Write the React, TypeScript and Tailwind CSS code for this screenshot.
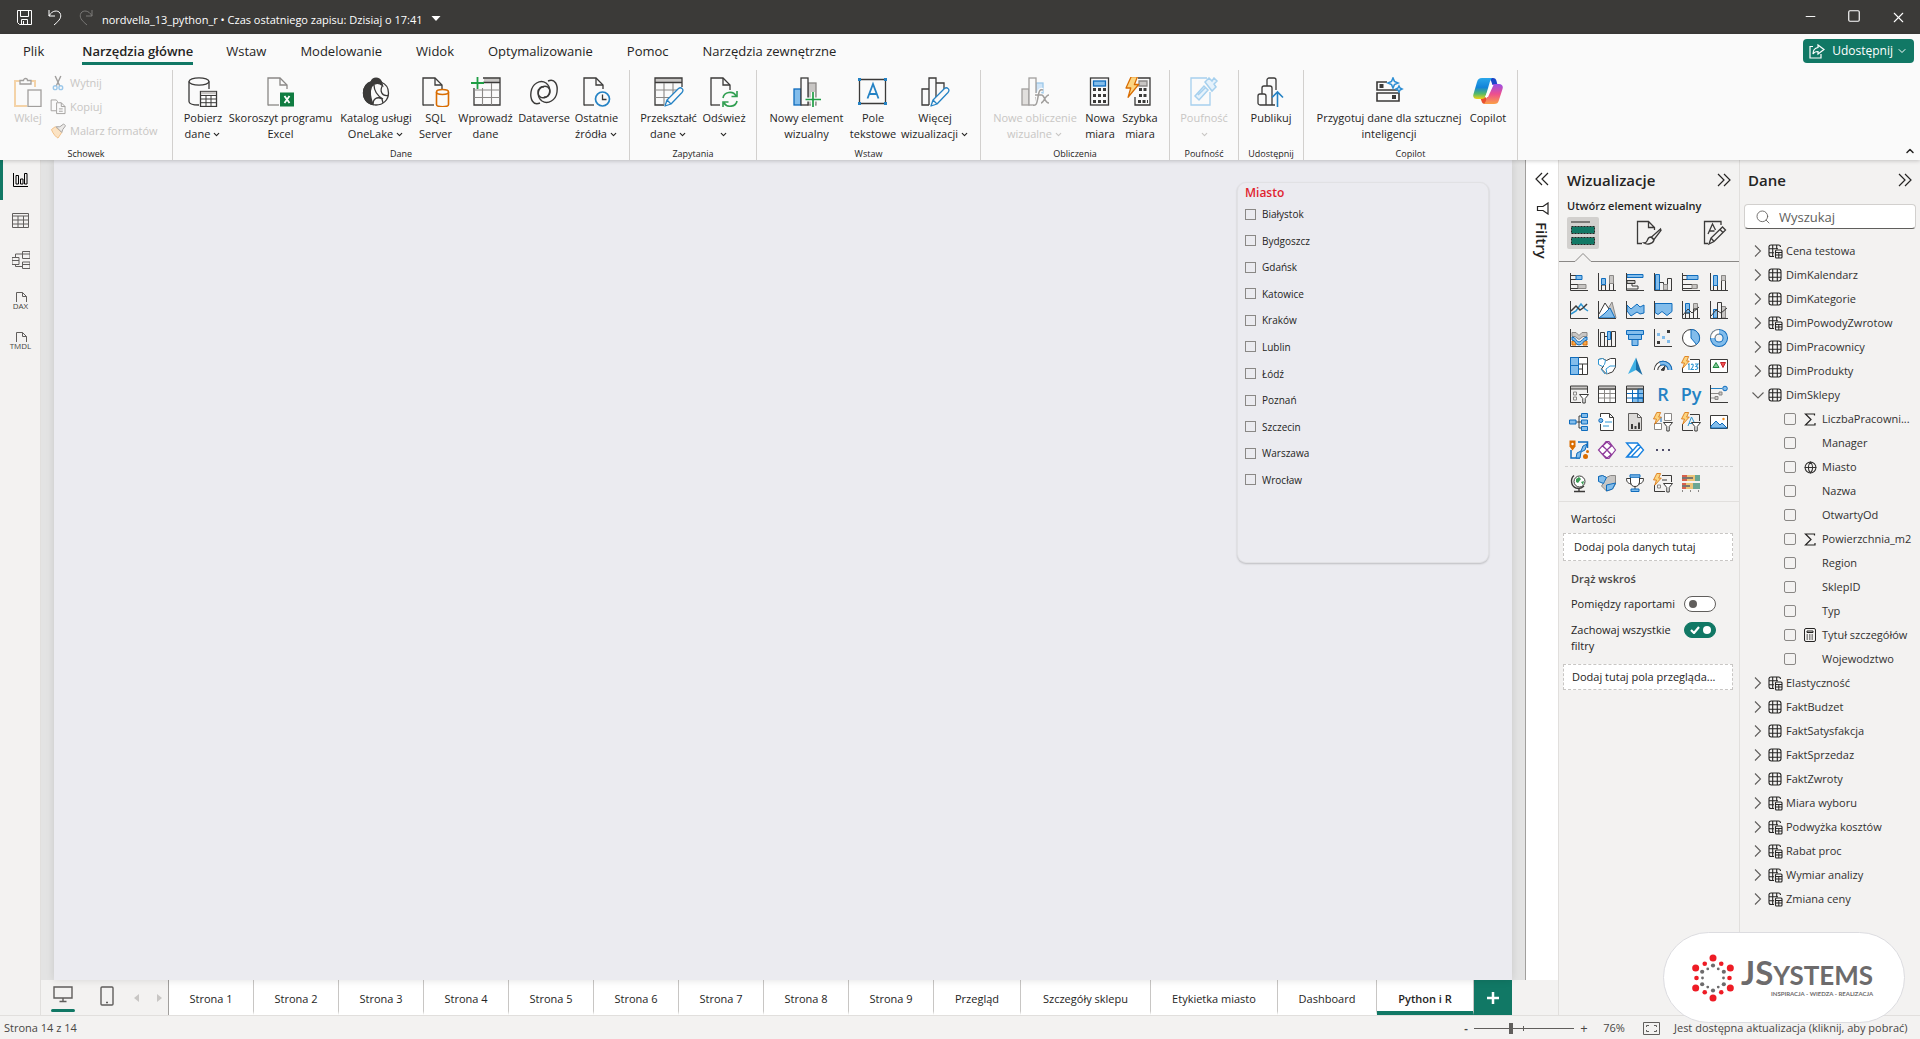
import React, { useState } from 'react';
import { ChevronDown, ChevronUp, Globe, Minus, Search, Square, X } from 'lucide-react';

const DARK = '#3b3a39';
const BLUE = '#0f6cbd';
const SKY = '#83bdeb';
const GRAY = '#c8c6c4';
const MID = '#8a8886';

/* ---------- ribbon icons ---------- */

const RibbonSvg: React.FC<{ children: React.ReactNode }> = ({ children }) => (
  <svg width="30" height="30" viewBox="-1 0 30 30" fill="none" stroke={DARK} strokeWidth="1.3" aria-hidden="true">
    {children}
  </svg>
);

const Page: React.FC<{ cut?: string }> = ({ cut = 'M1 28.5V1h12l7 7v4' }) => (
  <>
    <path d={cut} />
    <path d="M13 1v7h7" />
  </>
);

const BoltShape: React.FC<{ transform?: string }> = ({ transform }) => (
  <path transform={transform} d="M5 0h6L8 7h4L2 18l2.500-8H0z" fill="#fcd581" stroke="#d96c00" strokeWidth="1.2" strokeLinejoin="round" />
);

const PencilShape: React.FC = () => (
  <path d="M10 29l2-6L23.500 11.500c2.500-2 6 1 3.500 4L16 27z M12 23l4 4" fill="#fafafa" stroke="#2482c4" strokeLinejoin="round" />
);

const icons: Record<string, React.ReactNode> = {
  paste: (
    <RibbonSvg>
      <path d="M6 4H1v25h12M17 4h4v6" stroke="#f4d3a8" strokeWidth="2" />
      <path d="M6 7V3.500h3.500a2 2 0 014 0H17V7z" stroke="#a19f9d" />
      <rect x="14" y="13" width="13" height="16.500" stroke="#a19f9d" fill="#fafafa" />
    </RibbonSvg>
  ),
  database: (
    <RibbonSvg>
      <path d="M0 4.500v20c0 2 4 3.500 10 3.500" />
      <path d="M20 4.500V12" />
      <ellipse cx="10" cy="4.500" rx="10" ry="3.700" />
      <rect x="11.500" y="14.500" width="16" height="15" fill="#fff" />
      <path d="M12 16h15" strokeWidth="2.500" stroke={GRAY} />
      <path d="M11.500 18.500h16M11.500 22h16M11.500 25.700h16M17 18v11M22 18v11" strokeWidth="1" />
    </RibbonSvg>
  ),
  excel: (
    <RibbonSvg>
      <g stroke={MID}>
        <Page />
        <path d="M1 28h11" />
      </g>
      <rect x="13" y="15.500" width="14" height="14" fill="#107c41" stroke="none" />
      <path d="M17.500 19l5 7M22.500 19l-5 7" stroke="#fff" strokeWidth="1.800" />
    </RibbonSvg>
  ),
  onelake: (
    <RibbonSvg>
      <path d="M19 5c5 2 7.500 6 7.500 11 0 7-5.500 12-12.500 12S1.500 23 1.500 16C1.500 10 5 6 9 5" />
      <path d="M9 5c2-5 8-5 10.500 0l1 3.500c-4-3-8-2.500-11 1-2 5-1 12 1.500 18C4 26.500 1.500 21 1.500 16 1.500 10 5 6 9 5z" fill={DARK} />
      <path d="M12 8c0 5 3 11 9 14M20.500 8.500c-3 5-1 11 5.500 10M11 27c0-5 4-8 9-5l1 4" />
    </RibbonSvg>
  ),
  sql: (
    <RibbonSvg>
      <Page />
      <path d="M1 28h11" />
      <path d="M14.500 15v12.500c0 3 12 3 12 0V15" fill="#fafafa" stroke="#d96c00" strokeWidth="1.600" />
      <ellipse cx="20.500" cy="15" rx="6" ry="2.500" fill="#fafafa" stroke="#d96c00" strokeWidth="1.600" />
    </RibbonSvg>
  ),
  enter: (
    <RibbonSvg>
      <path d="M12 3.500h16" stroke={GRAY} strokeWidth="4" />
      <path d="M11 1h17v27H2V11M11 5.500h17" />
      <path d="M2 13h26M2 20.500h26M10.500 11v17M19.500 6v22" stroke={MID} strokeWidth="1.100" />
      <path d="M5.500 0v12M-1 6h13" stroke="#1f9e45" strokeWidth="1.800" />
    </RibbonSvg>
  ),
  dataverse: (
    <RibbonSvg>
      <g strokeWidth="1.400">
        <path d="M18 4c7-3 10 4 9 11-1 8-9 13-15 9-5-4-5-11 0-14 4-2 8 0 8 5 0 3-3 6-6 5" />
        <path d="M10 26c-7 3-10-4-9-11C2 7 10 2 16 6c5 4 5 11 0 14-4 2-8 0-8-5 0-3 3-6 6-5" />
      </g>
    </RibbonSvg>
  ),
  recent: (
    <RibbonSvg>
      <Page />
      <path d="M1 28h10" />
      <circle cx="19.500" cy="22" r="7" stroke="#2482c4" strokeWidth="1.700" fill="#fafafa" />
      <path d="M19.500 17.500V22.500h4" stroke={DARK} />
    </RibbonSvg>
  ),
  transform: (
    <RibbonSvg>
      <path d="M0 3h27" stroke={GRAY} strokeWidth="4" />
      <path d="M9 28H0V1h27v9M0 5.500h27" />
      <path d="M0 13h22M0 20.500h14M9 6v22M18 6v11" stroke={MID} strokeWidth="1.100" />
      <PencilShape />
    </RibbonSvg>
  ),
  refresh: (
    <RibbonSvg>
      <Page cut="M1 28.500V1h12l7 7v5" />
      <path d="M1 28h9" />
      <path d="M13 21c1-6 10-8 13-2M27 14v5.500h-5.500M27 24c-1 6-10 7-13 2M13 30v-5h5.500" stroke="#2f9e50" strokeWidth="1.600" />
    </RibbonSvg>
  ),
  visual: (
    <RibbonSvg>
      <rect x="15" y="6" width="8" height="22" fill={GRAY} stroke={MID} />
      <rect x="1" y="12" width="7" height="16" fill={SKY} stroke={BLUE} />
      <rect x="8" y="1" width="7" height="27" fill="#fafafa" />
      <path d="M20 15v15M12.500 22.500H28" stroke="#fafafa" strokeWidth="4" />
      <path d="M20 15v15M12.500 22.500H28" stroke="#1f9e45" strokeWidth="1.700" />
    </RibbonSvg>
  ),
  textbox: (
    <RibbonSvg>
      <path d="M.5 2.500h26v24H.5z" />
      <path d="M8.500 21.500L14 7l5.500 14.500M10.500 17h7" stroke="#2482c4" strokeWidth="1.800" />
      <path d="M-1 1h3v3h-3zM25 1h3v3h-3zM-1 25h3v3h-3zM25 25h3v3h-3z" fill="#2482c4" stroke="none" />
    </RibbonSvg>
  ),
  more: (
    <RibbonSvg>
      <path d="M8 28H1V12h7M8 28V1h7v26M15 6h8v6" />
      <PencilShape />
    </RibbonSvg>
  ),
  fx: (
    <RibbonSvg>
      <rect x="15" y="6" width="7" height="10" fill="#cfe4f7" stroke="#9cc8ea" />
      <rect x="1" y="12" width="7" height="16" fill="#e1dfdd" stroke="#a19f9d" />
      <rect x="8" y="1" width="7" height="27" fill="#fafafa" stroke="#a19f9d" />
      <path d="M22 13c-4-1-4 2-5 7s-1 9-5 8M14 18h6M19 18c4-1 3 8 8 8M27 18c-4 0-5 8-8 8" stroke="#fafafa" strokeWidth="4" />
      <path d="M22 13c-4-1-4 2-5 7s-1 9-5 8M14 18h6M20 18c4-1 3 8 8 8M28 18c-4 0-5 8-8 8" stroke="#a19f9d" strokeWidth="1.500" />
    </RibbonSvg>
  ),
  calc: (
    <RibbonSvg>
      <rect x="4.500" y="1" width="18" height="27" />
      <rect x="7.500" y="4" width="12" height="5" fill={SKY} stroke={BLUE} />
      <path d="M7 12.500h14M7 18.500h14M7 24.500h14" strokeWidth="3" strokeDasharray="3 2" />
    </RibbonSvg>
  ),
  quick: (
    <RibbonSvg>
      <path d="M12 1h12v27H9V20" />
      <path d="M13 4h8v5h-8z" fill={GRAY} stroke={MID} />
      <path d="M13 12.500h9M13 18.500h9M12 24.500h10" strokeWidth="3" strokeDasharray="3 1.500" />
      <BoltShape transform="translate(0 -.5) scale(1.050 1.150)" />
    </RibbonSvg>
  ),
  label: (
    <RibbonSvg>
      <path d="M17 1H1v27h19V15" stroke="#a6d0ee" />
      <path d="M5 19L14 9l4 4-9 10zM8 18l7-7M15 5l4-4 3 3 2-3 3 3-3 3 2 3-4 4z" stroke="#a6d0ee" strokeWidth="1.500" fill="#e6f2fb" />
    </RibbonSvg>
  ),
  publish: (
    <RibbonSvg>
      <path d="M10 9V3c0-1 1-2 2-2h5c1 0 2 1 2 2v10M5 17v-6c0-1 1-2 2-2h6c1 0 2 1 2 2v17M15 28H3c-1 0-2-1-2-2v-7c0-1 1-2 2-2h4c1 0 2 1 2 2v9M15 28h3" />
      <path d="M20.500 30V15M15 20.500l5.500-5.500 5.500 5.500" stroke="#2482c4" strokeWidth="1.600" />
    </RibbonSvg>
  ),
  prepare: (
    <RibbonSvg>
      <path d="M12 5H2v8h22M2 16h22v8H2z" strokeWidth="1.600" />
      <path d="M4.500 7h4v4h-4zM17 18h4v4h-4z" fill={DARK} stroke="none" />
      <path d="M18 1l1.500 3.500L23 6l-3.500 1.500L18 11l-1.500-3.500L13 6l3.500-1.500zM24 9l1 2 2 1-2 1-1 2-1-2-2-1 2-1z" stroke="#2f8fd4" strokeWidth="1.600" fill="#fafafa" />
    </RibbonSvg>
  ),
  copilot: (
    <RibbonSvg>
      <defs>
        <linearGradient id="cpLeft" x1="0" y1="0" x2="0" y2="1">
          <stop offset="0" stopColor="#2aa7ea" />
          <stop offset=".45" stopColor="#1283d9" />
          <stop offset=".75" stopColor="#55b96a" />
          <stop offset="1" stopColor="#f3d313" />
        </linearGradient>
        <linearGradient id="cpRight" x1="0" y1="0" x2="0" y2="1">
          <stop offset="0" stopColor="#9a4fe6" />
          <stop offset=".5" stopColor="#ee4f8e" />
          <stop offset="1" stopColor="#fba045" />
        </linearGradient>
      </defs>
      <g stroke="none">
        <path d="M16 1h3c2 0 3 1 3.500 3l1 4h-5z" fill="#1b46c8" />
        <path d="M6 20h4c2 0 3 1 3 3l1 4h-3c-2 0-3-1-3.500-3z" fill="#e8502e" />
        <path d="M8 1h10c-1 1-2 3-2.500 5L12 18c-1 3-2 4-5 4H3c-3 0-4.500-2-3.500-5L3 5c1-3 2-4 5-4z" fill="url(#cpLeft)" />
        <path d="M20 27H10c1-1 2-3 2.500-5L16 11c1-3 2-4 5-4h4c3 0 4.500 2 3.500 5L25 23c-1 3-2 4-5 4z" fill="url(#cpRight)" />
        <path d="M16.500 8h3L14 20h-3z" fill="#fff" />
      </g>
    </RibbonSvg>
  ),
};

/* ---------- visual gallery icons ---------- */

const Axis = () => <path d="M.5 0v17.500H18" />;

const galleryIcons: { name: string; art?: React.ReactNode; text?: string }[] = [
  {
    name: 'Skumulowany wykres słupkowy poziomy',
    art: (
      <>
        <path d="M1 2.500h6v4H1M1 11.500h7v4H1" />
        <path d="M6 2.500h6v4H6z" fill={SKY} stroke={BLUE} />
        <path d="M8 11.500h8v4H8z" fill={GRAY} stroke={MID} />
        <Axis />
      </>
    ),
  },
  {
    name: 'Skumulowany wykres kolumnowy',
    art: (
      <>
        <path d="M3.500 17v-5h4v5M11.500 17V10h4v7" />
        <path d="M3.500 5.500h4v6h-4z" fill={SKY} stroke={BLUE} />
        <path d="M11.500 2.500h4v8h-4z" fill={GRAY} stroke={MID} />
        <Axis />
      </>
    ),
  },
  {
    name: 'Grupowany wykres słupkowy poziomy',
    art: (
      <>
        <path d="M1 1.500h16v3H1z" fill={SKY} stroke={BLUE} />
        <path d="M1 7.500h8v3H1z" fill={GRAY} />
        <path d="M1 10.500h5v2.500h6v3H1" />
        <Axis />
      </>
    ),
  },
  {
    name: 'Grupowany wykres kolumnowy',
    art: (
      <>
        <path d="M1.500 1.500h4V17h-4z" fill={SKY} stroke={BLUE} />
        <path d="M5.500 9.500h4V17M13.500 17V5.500h4V17" />
        <path d="M9.500 11.500h4V17h-4z" fill={GRAY} stroke={MID} />
        <Axis />
      </>
    ),
  },
  {
    name: 'Wykres 100% słupkowy',
    art: (
      <>
        <path d="M1 6.500h14M1 2.500h4M1 11.500h14v4H1" />
        <path d="M5 2.500h11v4H5z" fill={SKY} stroke={BLUE} />
        <path d="M10 11.500h5v4h-5z" fill={GRAY} stroke={MID} />
        <Axis />
      </>
    ),
  },
  {
    name: 'Wykres 100% kolumnowy',
    art: (
      <>
        <path d="M3.500 17V3M7.500 3v14M11.500 17V3h4v14" />
        <path d="M3.500 2.500h4v10h-4z" fill={SKY} stroke={BLUE} />
        <path d="M11.500 2.500h4v5h-4z" fill={GRAY} stroke={MID} />
        <Axis />
      </>
    ),
  },
  {
    name: 'Wykres liniowy',
    art: (
      <>
        <path d="M1 13l5-3 5-7 4 5 3 2" stroke="#2e96d2" strokeWidth="1.500" />
        <path d="M1 10l5-5 4 4 3-2 4-4" strokeWidth="1.500" />
        <Axis />
      </>
    ),
  },
  {
    name: 'Wykres warstwowy',
    art: (
      <>
        <path d="M8 11l6-10 4 16" fill={GRAY} stroke={MID} />
        <path d="M1 13L7 2l6 9" fill="#fff" />
        <path d="M1 17l5-4 6-6 5 10z" fill={SKY} stroke={BLUE} />
        <Axis />
      </>
    ),
  },
  {
    name: 'Skumulowany wykres warstwowy',
    art: (
      <>
        <path d="M1 4l4 4 6-5 3 3 4-2v8l-4 1-3-2-6 4-4-5z" fill={SKY} stroke={BLUE} />
        <Axis />
      </>
    ),
  },
  {
    name: 'Wykres warstwowy 100%',
    art: (
      <>
        <path d="M1 2.500h17v8l-5 4-5-4-4 3-3-2z" fill={SKY} stroke={BLUE} />
        <Axis />
      </>
    ),
  },
  {
    name: 'Wykres liniowy i skumulowany kolumnowy',
    art: (
      <>
        <path d="M3.500 2.500h4V12h-4z" fill={SKY} stroke={BLUE} />
        <path d="M11.500 2.500h4V8h-4z" fill={GRAY} stroke={MID} />
        <path d="M3.500 17v-5h4v5M11.500 17V8h4v9M1 14l5-6 4 4 7-6" />
        <Axis />
      </>
    ),
  },
  {
    name: 'Wykres liniowy i grupowany kolumnowy',
    art: (
      <>
        <path d="M3.500 8.500h4V17h-4z" fill={SKY} stroke={BLUE} />
        <path d="M11.500 5.500h4V17h-4z" fill={GRAY} stroke={MID} />
        <path d="M7.500 17V1.500h4V17M1 15l5-6 5 3 6-5" />
        <Axis />
      </>
    ),
  },
  {
    name: 'Wykres wstążkowy',
    art: (
      <>
        <path d="M2 3.500h4l3 3 3-3h5v4h-4l-4 3-4-3H2z" fill={GRAY} stroke={MID} />
        <path d="M2 12h4v4H2zM13 12h4v4h-4z" fill="#f7a64a" stroke="#d96c00" />
        <path d="M2 8c4 0 4 5 7 5s4-5 8-5v3c-4 0-4 5-8 5s-3-5-7-5z" fill={SKY} stroke={BLUE} />
        <Axis />
      </>
    ),
  },
  {
    name: 'Wykres kaskadowy',
    art: (
      <>
        <path d="M2.500 17V3.500h4V17M6.500 7.500h3V17M13.500 17V2.500h4V17" />
        <path d="M9.500 2.500h3v8h-3z" fill={SKY} stroke={BLUE} />
        <Axis />
      </>
    ),
  },
  {
    name: 'Lejek',
    art: <path d="M.5 1.500h17v4H.5zM2.500 5.500h13v5h-13zM6 10.500h6v6H6z" fill={SKY} stroke={BLUE} />,
  },
  {
    name: 'Wykres punktowy',
    art: (
      <>
        <path d="M13 1h3v3h-3zM3 12h3v3H3z" fill={DARK} stroke="none" />
        <path d="M3 4h3v3H3zM8 7h3v3H8zM13 11h3v3h-3z" fill={SKY} stroke="none" />
        <Axis />
      </>
    ),
  },
  {
    name: 'Wykres kołowy',
    art: (
      <>
        <circle cx="9" cy="9" r="8.500" fill="#fff" />
        <path d="M9 .5V9l5.500 6.500A8.500 8.500 0 009 .5z" fill={SKY} stroke={BLUE} />
      </>
    ),
  },
  {
    name: 'Wykres pierścieniowy',
    art: (
      <>
        <circle cx="9" cy="9" r="6.300" stroke={BLUE} strokeWidth="5.500" />
        <circle cx="9" cy="9" r="6.300" stroke={SKY} strokeWidth="3.500" />
        <path d="M2.700 9A6.300 6.300 0 019 2.700" stroke={MID} strokeWidth="5.500" />
        <path d="M2.700 9A6.300 6.300 0 019 2.700" stroke="#fff" strokeWidth="3.500" />
      </>
    ),
  },
  {
    name: 'Mapa drzewa',
    art: (
      <>
        <path d="M.5.500h17v17H.5zM8.500 7h9M8.500 12h4M12.500 7v10" fill="#fff" />
        <path d="M.5.500h8v8h-8zM.5 8.500h8v9h-8z" fill={SKY} stroke={BLUE} />
      </>
    ),
  },
  {
    name: 'Mapa',
    art: (
      <>
        <path d="M.5 2.500l4-1 4 2 4-2h5V10l-3 5-6 2-5-5 2-3-4-2z" fill="#fff" />
        <path d="M.5 2.500l4-1 3 2-1 4-2 2-4-2zM9 17l-1-5 4-3h5.500M3 12l4 5" stroke="#2e96d2" fill="#fff" />
      </>
    ),
  },
  {
    name: 'Azure Map',
    art: (
      <>
        <path d="M10 .500L2 17l8-4z" fill="#3fb0e4" stroke="none" />
        <path d="M10 .500L16.500 18 10 13z" fill="#1b6ea6" stroke="none" />
      </>
    ),
  },
  {
    name: 'Miernik',
    art: (
      <>
        <path d="M2 13a7 7 0 0114 0" stroke={DARK} strokeWidth="4.500" />
        <path d="M2 13a7 7 0 0114 0" stroke="#fff" strokeWidth="2.500" />
        <path d="M6 6.700A7 7 0 0116 13" stroke={BLUE} strokeWidth="4.500" />
        <path d="M6 6.700A7 7 0 0116 13" stroke={SKY} strokeWidth="2.500" />
        <path d="M7 13l4-4-1 4.500z" fill={DARK} />
      </>
    ),
  },
  {
    name: 'Karta',
    art: (
      <>
        <path d="M8 2.500h9.500v13H.5v-5" fill="#fff" />
        <path d="M6 7.500l1-.500v6M9 7.500c3-1.500 3 1.500 0 5h3M13 7h3l-2 2.500c3 0 2 3.500-1 3" stroke="#2e96d2" strokeWidth="1.100" />
        <BoltShape transform="translate(-.5 -.5) scale(.65)" />
      </>
    ),
  },
  {
    name: 'KPI',
    art: (
      <>
        <path d="M.5 2.500h17v13H.5z" fill="#fff" />
        <path d="M3 10.500l3-5 3 5z" fill="#7fc796" stroke="#1f8a3f" />
        <path d="M10.500 5.500h5l-2.500 5z" fill="#f05050" stroke="#c4262e" />
      </>
    ),
  },
  {
    name: 'Fragmentator',
    art: (
      <>
        <path d="M.5 1h17v3H.5z" fill={GRAY} />
        <path d="M17.500 4v4M.5 4v13.500H11" />
        <path d="M3.500 7h3v3h-3zM3.500 12h3v3h-3z" stroke={MID} />
        <path d="M9.500 9.500h9l-3.300 4V18h-2.400v-4.500z" fill="#fff" />
      </>
    ),
  },
  {
    name: 'Tabela',
    art: (
      <>
        <path d="M.5 4h17v13.500H.5z" fill="#fff" />
        <path d="M6.500 5v12M12 5v12M1 8.500h16M1 13h16" stroke={MID} />
        <path d="M1 2.300h16" stroke={GRAY} strokeWidth="2" />
        <path d="M.5 1h17v16.500H.5zM.5 4h17" />
      </>
    ),
  },
  {
    name: 'Macierz',
    art: (
      <>
        <path d="M.5 4h17v13.500H.5z" fill="#fff" />
        <path d="M12 4h5.500v9H12zM6.500 13H17v4.500H6.500z" fill={SKY} stroke={BLUE} />
        <path d="M6.500 5v12M12 5v12M1 8.500h16M1 13h16" stroke={BLUE} />
        <path d="M1 2.300h16" stroke={GRAY} strokeWidth="2" />
        <path d="M.5 1h17v16.500H.5zM.5 4h17" />
      </>
    ),
  },
  { name: 'Wizualizacja skryptu języka R', text: 'R' },
  { name: 'Wizualizacja w języku Python', text: 'Py' },
  {
    name: 'Kluczowe elementy wpływające',
    art: (
      <>
        <path d="M1 8.500h8M1 13h4" stroke={MID} />
        <path d="M1 3.500h11" stroke="#2482c4" />
        <circle cx="15" cy="3.500" r="2.300" fill={SKY} stroke={BLUE} />
        <path d="M9 7h3v3H9zM5 11.500h3v3H5z" fill={GRAY} stroke={MID} />
        <Axis />
      </>
    ),
  },
  {
    name: 'Drzewo dekompozycji',
    art: (
      <>
        <path d="M6 9h6M12 3H9v12h3" />
        <path d="M-.5 7h6.500v4H-.5zM11.500.500h6v4h-6zM11.500 7h6v4h-6zM11.500 13.500h6v4h-6z" fill={SKY} stroke={BLUE} />
      </>
    ),
  },
  {
    name: 'Pytania i odpowiedzi',
    art: (
      <>
        <path d="M2.500 4V.500h9l4 4v13h-13V11M11.500.500v4h4" fill="#fff" />
        <path d="M7 9h7M5 13h6" stroke="#2e96d2" />
        <circle cx="2.800" cy="7.500" r="2" fill={SKY} stroke={BLUE} />
      </>
    ),
  },
  {
    name: 'Raport podzielony na strony',
    art: (
      <>
        <path d="M2.500.500h9l4 4v13h-13zM11.500.500v4h4" fill="#dddbd9" stroke="#605e5c" />
        <path d="M5 11h2v5H5zM8.500 13h2v3h-2zM12 9.500h2V16h-2z" fill={DARK} stroke="none" />
      </>
    ),
  },
  {
    name: 'Narracja inteligentna',
    art: (
      <>
        <path d="M10.500.500h7v7h-7zM.5 10.500h7v6h-7z" fill="#fff" stroke={MID} />
        <path d="M7 4v5" stroke={BLUE} />
        <path d="M9.500 9.500h9l-3.300 4V18h-2.400v-4.500z" fill="#fff" />
        <BoltShape transform="translate(-.5 -.5) scale(.65)" />
      </>
    ),
  },
  {
    name: 'Fragmentator tekstu',
    art: (
      <>
        <path d="M8 1.500h9.500V8M.5 11v6.500H11" />
        <path d="M6 13l3.500-9 3 6M7 10.500h3" stroke="#2e96d2" />
        <path d="M9.500 9.500h9l-3.300 4V18h-2.400v-4.500z" fill="#fff" />
        <BoltShape transform="translate(-.5 -.5) scale(.65)" />
      </>
    ),
  },
  {
    name: 'Obraz',
    art: (
      <>
        <path d="M.5 2.500h17v13H.5z" fill="#fff" />
        <path d="M1 13l5-5 4 4 2-2 5 5H1z" fill={SKY} stroke={BLUE} />
        <circle cx="13.500" cy="6" r="1.200" fill="#f28a1a" stroke="none" />
      </>
    ),
  },
  {
    name: 'Mapy ArcGIS',
    art: (
      <>
        <path d="M8 1h9.500v6M1 9v8h9" stroke={BLUE} strokeWidth="1.500" />
        <path d="M6 17l1-5 4-2 2-5 4-2-2 6-4 2-1 6z" fill={SKY} stroke={BLUE} />
        <path d="M-.5-.500h6v6L2.500 9.500-.5 5.500z" fill="#d96c00" stroke="none" />
        <circle cx="2.500" cy="3" r="1.200" fill="#fff" stroke="none" />
        <circle cx="15.500" cy="15.500" r="2.500" fill="#d96c00" stroke="none" />
        <circle cx="17.500" cy="10.500" r="1.500" fill="#d96c00" stroke="none" />
      </>
    ),
  },
  {
    name: 'Power Apps',
    art: (
      <path
        d="M4.500 5L8 .500h3L17.500 9 11 17.500H8L.5 9l4-4.500L9 9l4.500 5M13.500 4.500L9 9l-4.500 5M9 1l4.500 4L9 9 4.500 5zM9 9l4.500 4.500L9 17l-4.500-3.500z"
        stroke="#8f3a9b"
        fill="#fff"
        strokeWidth="1.200"
      />
    ),
  },
  {
    name: 'Power Automate',
    art: (
      <path d="M.5 2h11L17.500 9l-6 7H.5l6-7zM2 15L12.500 3M5 16L15 5.500" stroke="#1680e0" strokeWidth="1.300" fill="#fff" />
    ),
  },
  {
    name: 'Więcej opcji',
    art: <path d="M2 8h2v2H2zM8 8h2v2H8zM14 8h2v2h-2z" fill="#4f4d6a" stroke="none" />,
  },
];

const customIcons: { name: string; art: React.ReactNode }[] = [
  {
    name: 'Globus',
    art: (
      <>
        <circle cx="9.500" cy="7.500" r="5.500" fill="#fff" />
        <path d="M6 5l3-2 2 2-3 4-2-1zM11 8l3-1-1 4z" fill="#3a9b54" stroke="none" />
        <path d="M4 1.500C0 5 1 12 6 14c3 1 6 0 8-2M9 14v3.500M4 17.500h11" strokeWidth="1.400" />
      </>
    ),
  },
  {
    name: 'Kartogram',
    art: (
      <>
        <path d="M.5 2.500l4-1 4 2 4-2h5V10l-3 5-6 2-5-5 2-3-4-2z" fill={GRAY} stroke={MID} />
        <path d="M.5 2.500l4-1 4 2-2 4-1 2-5-2zM8.500 11l9-2-3 6-6 2z" fill={SKY} stroke={BLUE} />
      </>
    ),
  },
  {
    name: 'Cele',
    art: (
      <>
        <path d="M4.500 4.500h-4c0 4 2 5 5 5.500M13.500 4.500h4c0 4-2 5-5 5.500M4.500 3v5c0 3 2 4.500 4.500 4.500s4.500-1.500 4.500-4.500V3M9 12.500V15" fill="#fff" />
        <path d="M4 .800h10v2.500H4zM5 15h8v2.500H5z" fill={SKY} stroke={BLUE} />
      </>
    ),
  },
  {
    name: 'Fragmentator listy',
    art: (
      <>
        <path d="M8 1.500h9.500V8M.5 11v6.500H11M8 6h5" />
        <path d="M3.500 11h3v3h-3z" stroke={MID} />
        <path d="M9.500 9.500h9l-3.300 4V18h-2.400v-4.500z" fill="#fff" />
        <BoltShape transform="translate(-.5 -.5) scale(.65)" />
      </>
    ),
  },
  {
    name: 'Wykres punktorowy',
    art: (
      <g stroke="none">
        <path d="M0 1h5v6H0zM0 9h4v6H0z" fill="#d9604c" />
        <path d="M5 1h8v6H5zM4 9h7v6H4z" fill="#ecc578" />
        <path d="M13 1h5v6h-5zM11 9h7v6h-7z" fill="#6aa793" />
        <path d="M0 3h11v2H0zM0 11h8v2H0z" fill="#7a7570" />
        <path d="M0 16h1v2H0zM8 16h1v2H8zM16 16h1v2h-1z" fill={MID} />
      </g>
    ),
  },
];

const GalleryButton: React.FC<{ name: string; art?: React.ReactNode; text?: string }> = ({ name, art, text }) => (
  <button type="button" aria-label={name} title={name} className="flex h-7 w-7 items-center justify-center">
    {text ? (
      <span className="text-[18px] leading-5 font-semibold text-[#2482c4]">{text}</span>
    ) : (
      <svg width="20" height="20" viewBox="-1 -1 20 20" fill="none" stroke={DARK}>
        {art}
      </svg>
    )}
  </button>
);

/* ---------- ribbon ---------- */

interface RibbonItem {
  icon: string;
  lines: string[];
  width: string;
  menu?: boolean;
  disabled?: boolean;
}

interface RibbonGroup {
  label: string;
  width: string;
  items: RibbonItem[];
}

const ribbonGroups: RibbonGroup[] = [
  {
    label: 'Dane',
    width: 'w-[457px]',
    items: [
      { icon: 'database', lines: ['Pobierz', 'dane'], width: 'w-[44px]', menu: true },
      { icon: 'excel', lines: ['Skoroszyt programu', 'Excel'], width: 'w-[111px]' },
      { icon: 'onelake', lines: ['Katalog usługi', 'OneLake'], width: 'w-[80px]', menu: true },
      { icon: 'sql', lines: ['SQL', 'Server'], width: 'w-[39px]' },
      { icon: 'enter', lines: ['Wprowadź', 'dane'], width: 'w-[61px]' },
      { icon: 'dataverse', lines: ['Dataverse'], width: 'w-[56px]' },
      { icon: 'recent', lines: ['Ostatnie', 'źródła'], width: 'w-[49px]', menu: true },
    ],
  },
  {
    label: 'Zapytania',
    width: 'w-[127px]',
    items: [
      { icon: 'transform', lines: ['Przekształć', 'dane'], width: 'w-[62px]', menu: true },
      { icon: 'refresh', lines: ['Odśwież', ''], width: 'w-[49px]', menu: true },
    ],
  },
  {
    label: 'Wstaw',
    width: 'w-[224px]',
    items: [
      { icon: 'visual', lines: ['Nowy element', 'wizualny'], width: 'w-[82px]' },
      { icon: 'textbox', lines: ['Pole', 'tekstowe'], width: 'w-[51px]' },
      { icon: 'more', lines: ['Więcej', 'wizualizacji'], width: 'w-[73px]', menu: true },
    ],
  },
  {
    label: 'Obliczenia',
    width: 'w-[189px]',
    items: [
      { icon: 'fx', lines: ['Nowe obliczenie', 'wizualne'], width: 'w-[92px]', menu: true, disabled: true },
      { icon: 'calc', lines: ['Nowa', 'miara'], width: 'w-[38px]' },
      { icon: 'quick', lines: ['Szybka', 'miara'], width: 'w-[42px]' },
    ],
  },
  {
    label: 'Poufność',
    width: 'w-[69px]',
    items: [{ icon: 'label', lines: ['Poufność', ''], width: 'w-[52px]', menu: true, disabled: true }],
  },
  {
    label: 'Udostępnij',
    width: 'w-[65px]',
    items: [{ icon: 'publish', lines: ['Publikuj'], width: 'w-[46px]' }],
  },
  {
    label: 'Copilot',
    width: 'w-[214px]',
    items: [
      { icon: 'prepare', lines: ['Przygotuj dane dla sztucznej', 'inteligencji'], width: 'w-[155px]' },
      { icon: 'copilot', lines: ['Copilot'], width: 'w-[43px]' },
    ],
  },
];

const RibbonButton: React.FC<{ item: RibbonItem }> = ({ item }) => (
  <button
    type="button"
    disabled={item.disabled}
    className={`flex shrink-0 flex-col items-center text-[11px] leading-4 whitespace-nowrap disabled:text-[#c8c6c4] ${item.width}`}
  >
    {icons[item.icon]}
    <span className="mt-[3px] flex flex-col items-center">
      {item.lines.map((line, i) => (
        <span key={i} className="flex h-4 items-center gap-[2px]">
          {line}
          {item.menu && i === item.lines.length - 1 && <ChevronDown size={9} strokeWidth={3} />}
        </span>
      ))}
    </span>
  </button>
);

const clipboardItems = [
  {
    label: 'Wytnij',
    art: (
      <>
        <path d="M5 1l5 11M11 1L6 12" stroke="#a19f9d" strokeWidth="1.500" />
        <circle cx="5" cy="13.500" r="2" stroke="#9cc8ea" strokeWidth="1.500" />
        <circle cx="11" cy="13.500" r="2" stroke="#9cc8ea" strokeWidth="1.500" />
      </>
    ),
  },
  {
    label: 'Kopiuj',
    art: <path d="M6 12.500H.7V1H6l2 2M6.500 4h5l4 4v7.500h-9zM11.500 4v4h4M9 10.500h4M9 13h4" stroke="#a19f9d" />,
  },
  {
    label: 'Malarz formatów',
    art: (
      <>
        <path d="M1 7l4-3 7 6-4 6c-2-1-5-4-7-9z" fill="#fbe3c4" stroke="#f0be84" />
        <path d="M6 4l6 6 1-3 3-4-2-2-4 3z" fill="#eceae8" stroke="#a19f9d" />
      </>
    ),
  },
];

const TitleBar: React.FC = () => (
  <header className="flex h-[34px] shrink-0 items-center bg-[#3b3a38] text-white">
    <div className="flex items-center gap-[14px] pl-4">
      <button type="button" aria-label="Zapisz">
        <svg width="17" height="17" viewBox="0 0 17 17" fill="none" stroke="#fff">
          <path d="M1.500 1.500h14v14h-12l-2-2zM4.500 1.500v6h8v-6M5.500 15.500v-5h6v5M7.500 15v-3" />
        </svg>
      </button>
      <button type="button" aria-label="Cofnij">
        <svg width="17" height="17" viewBox="0 0 17 17" fill="none" stroke="#fff">
          <path d="M2 1v6h6M2 7c3-6 9-6 11-3 2 4 0 7-6 12" />
        </svg>
      </button>
      <button type="button" aria-label="Ponów" disabled>
        <svg width="17" height="17" viewBox="0 0 17 17" fill="none" stroke="#7a7977">
          <path d="M14 1v6H8M14 7C11 1 5 1 3 4c-2 4 0 7 6 12" />
        </svg>
      </button>
    </div>
    <button type="button" className="ml-[7px] flex items-center gap-2 pt-[6px] text-[11px] leading-4">
      <span>nordvella_13_python_r • Czas ostatniego zapisu: Dzisiaj o 17:41</span>
      <svg width="10" height="10" viewBox="0 0 10 10" fill="#fff">
        <path d="M.5 1h9L5 6z" />
      </svg>
    </button>
    <div className="ml-auto flex">
      <button type="button" aria-label="Minimalizuj" className="flex w-11 justify-center">
        <Minus size={15} strokeWidth={1.500} />
      </button>
      <button type="button" aria-label="Maksymalizuj" className="flex w-11 justify-center">
        <Square size={14} strokeWidth={2} />
      </button>
      <button type="button" aria-label="Zamknij" className="flex w-11 justify-center">
        <X size={17} strokeWidth={1.500} />
      </button>
    </div>
  </header>
);

const menu = ['Wstaw', 'Modelowanie', 'Widok', 'Optymalizowanie', 'Pomoc', 'Narzędzia zewnętrzne'];

const Ribbon: React.FC = () => (
  <div className="relative z-10 shrink-0 bg-[#fafafa] shadow-[0_1px_4px_rgba(0,0,0,0.2)]">
    <nav className="flex h-9 items-center pr-[6px] pb-[2px] pl-[23px] text-[13px] leading-4">
      <button type="button" className="mr-[38px]">Plik</button>
      <button type="button" className="mr-[33px] flex h-full flex-col justify-between pt-[9px] pb-[3px] font-semibold">
        Narzędzia główne
        <span className="h-[3px] w-full bg-[#117865]" />
      </button>
      <div className="flex gap-[34px]">
        {menu.map((m) => (
          <button key={m} type="button">{m}</button>
        ))}
      </div>
      <button type="button" className="ml-auto flex h-6 items-center gap-[7px] rounded bg-[#117865] px-[6px] text-[12px] text-white">
        <svg width="16" height="15" viewBox="0 0 16 15" fill="none" stroke="#fff" strokeWidth="1.200">
          <path d="M4 2.500H1v11.500h11V10M9 1l6 4.500L9 10V7.500C7 7.500 5 8 4 10c0-4 2-6 5-6.500z" />
        </svg>
        <span className="flex items-center gap-[3px]">
          Udostępnij
          <ChevronDown size={12} strokeWidth={2} />
        </span>
      </button>
    </nav>
    <div className="flex h-[90px]">
      <section className="flex w-[173px] shrink-0 flex-col border-r border-[#d2d0ce] pt-[7px]">
        <div className="flex flex-1 gap-[6px] pl-3 text-[11px] leading-4 text-[#c8c6c4]">
          <button type="button" disabled className="flex w-[32px] flex-col items-center gap-[3px]">
            {icons.paste}
            Wklej
          </button>
          <div className="-mt-[2px] flex flex-col gap-2">
            {clipboardItems.map((c) => (
              <button key={c.label} type="button" disabled className="flex items-center gap-1 whitespace-nowrap">
                <svg width="16" height="16" viewBox="0 0 16 17" fill="none">{c.art}</svg>
                {c.label}
              </button>
            ))}
          </div>
        </div>
        <h3 className="h-3 text-center text-[9px] leading-3">Schowek</h3>
      </section>
      {ribbonGroups.map((g) => (
        <section key={g.label} className={`flex shrink-0 flex-col border-r border-[#d2d0ce] pt-[7px] ${g.width}`}>
          <div className="flex flex-1 justify-center">
            {g.items.map((item) => (
              <RibbonButton key={item.icon} item={item} />
            ))}
          </div>
          <h3 className="h-3 text-center text-[9px] leading-3">{g.label}</h3>
        </section>
      ))}
      <button type="button" aria-label="Zwiń wstążkę" className="mr-1 mb-[3px] ml-auto self-end">
        <ChevronUp size={12} strokeWidth={3} />
      </button>
    </div>
  </div>
);

/* ---------- left rail ---------- */

const railIcons = [
  { name: 'Widok raportu', art: <path d="M1.500 2v13.500H16M4 4.500h2.500V13H4zM8.500 8H11v5H8.500zM12.500 2.500H15V13h-2.500z" stroke="#000" /> },
  { name: 'Widok tabeli', art: <path d="M.5 2.500h16v14H.5zM.5 5h16M.5 9h16M.5 13h16M6 5v11M11.500 5v11" /> },
  { name: 'Widok modelu', art: <path d="M0 6.500h7v7H0zM0 9.500h7M10.500.500H18v7h-7.500zM10.500 3H18M10.500 11H18v6.500h-7.500zM10.500 13.500H18M3.500 6V3h7M3.500 14v1.500h7" /> },
  { name: 'Widok zapytania DAX', label: 'DAX' },
  { name: 'Widok TMDL', label: 'TMDL' },
];

const Rail: React.FC = () => (
  <nav className="flex w-[41px] shrink-0 flex-col border-r border-[#e1dfdd] bg-[#f3f2f1]">
    {railIcons.map((r, i) => (
      <button
        key={r.name}
        type="button"
        aria-label={r.name}
        className={`flex h-10 w-full flex-col items-center justify-center border-l-[3px] pr-[2px] ${i === 0 ? 'border-[#117865]' : 'border-transparent'}`}
      >
        {r.art ? (
          <svg width="18" height="18" viewBox="0 0 18 18" fill="none" stroke="#605e5c">{r.art}</svg>
        ) : (
          <>
            <svg width="14" height="10" viewBox="0 0 14 10" fill="none" stroke="#605e5c">
              <path d="M2.500 10V.500h6l4 4V10M8.500.500v4h4" />
            </svg>
            <span className="text-[8px] leading-[7px] text-[#484644]">{r.label}</span>
          </>
        )}
      </button>
    ))}
  </nav>
);

/* ---------- report page ---------- */

const cities = ['Białystok', 'Bydgoszcz', 'Gdańsk', 'Katowice', 'Kraków', 'Lublin', 'Łódź', 'Poznań', 'Szczecin', 'Warszawa', 'Wrocław'];

const Slicer: React.FC = () => (
  <section className="absolute top-[22px] right-[23px] h-[381px] w-[252px] rounded-[9px] border border-[#e1e1e4] bg-[#ebebf0] px-[7px] pt-[2px] shadow-[0_1px_2px_rgba(0,0,0,0.2)]">
    <h2 className="text-[12px] leading-4 font-semibold text-[#e0242f]">Miasto</h2>
    <ul className="mt-[5px] flex h-[282px] flex-col justify-between">
      {cities.map((c) => (
        <li key={c}>
          <label className="flex h-4 items-center gap-[6px] text-[10px] leading-4">
            <input type="checkbox" className="h-[11px] w-[11px] appearance-none border border-[#8a8886] checked:bg-[#605e5c]" />
            {c}
          </label>
        </li>
      ))}
    </ul>
  </section>
);

const tabs = [
  ...Array.from({ length: 9 }, (_, i) => ({ name: `Strona ${i + 1}`, width: 'w-[85px]' })),
  { name: 'Przegląd', width: 'w-[87px]' },
  { name: 'Szczegóły sklepu', width: 'w-[130px]' },
  { name: 'Etykietka miasto', width: 'w-[127px]' },
  { name: 'Dashboard', width: 'w-[99px]' },
  { name: 'Python i R', width: 'w-[97px]' },
];

const PageTabs: React.FC = () => {
  const [active, setActive] = useState('Python i R');
  return (
    <div className="flex h-[35px] shrink-0 bg-[#f3f2f1] text-[11px] leading-4">
      <div className="flex w-[128px] shrink-0 items-center border-r border-[#a19f9d] pl-[10px]">
        <button type="button" aria-label="Układ pulpitu" className="flex w-6 flex-col items-center gap-[6px] pt-[3px]">
          <svg width="20" height="17" viewBox="0 0 20 17" fill="none" stroke="#605e5c" strokeWidth="1.400">
            <path d="M1 1h18v11H1zM10 12v3M6.500 15.500h7" />
          </svg>
          <span className="h-[3px] w-6 rounded-full bg-[#117865]" />
        </button>
        <button type="button" aria-label="Układ mobilny" className="ml-[25px] pb-1">
          <svg width="14" height="20" viewBox="0 0 14 20" fill="none" stroke="#605e5c" strokeWidth="1.400">
            <rect x="1" y="1" width="12" height="18" rx="1" />
            <path d="M6 16.500h2" />
          </svg>
        </button>
        <button type="button" aria-label="Poprzednia strona" className="ml-5">
          <svg width="6" height="8" viewBox="0 0 6 8" fill="#c8c6c4"><path d="M5 0v8L0 4z" /></svg>
        </button>
        <button type="button" aria-label="Następna strona" className="ml-4">
          <svg width="6" height="8" viewBox="0 0 6 8" fill="#c8c6c4"><path d="M1 0v8l5-4z" /></svg>
        </button>
      </div>
      {tabs.map((t) => (
        <button
          key={t.name}
          type="button"
          onClick={() => setActive(t.name)}
          className={`shrink-0 border-r border-r-[#c8c6c4] border-b-4 bg-white pt-[6px] ${t.width} ${
            active === t.name ? 'border-b-[#117865] font-semibold' : 'border-b-white'
          }`}
        >
          {t.name}
        </button>
      ))}
      <button type="button" aria-label="Nowa strona" className="flex w-[38px] shrink-0 items-center justify-center bg-[#117865]">
        <svg width="12" height="12" viewBox="0 0 12 12" stroke="#fff" strokeWidth="2.500">
          <path d="M6 0v12M0 6h12" />
        </svg>
      </button>
    </div>
  );
};

/* ---------- right panes ---------- */

const DoubleChevron: React.FC<{ left?: boolean }> = ({ left }) => (
  <svg width="14" height="14" viewBox="0 0 14 14" fill="none" stroke="#252423" strokeWidth="1.200">
    <path d={left ? 'M7 1L1 7l6 6M13 1L7 7l6 6' : 'M1 1l6 6-6 6M7 1l6 6-6 6'} />
  </svg>
);

const FiltersPane: React.FC = () => (
  <aside className="flex w-[33px] shrink-0 flex-col items-center border-l border-[#a19f9d] bg-white pt-3">
    <button type="button" aria-label="Rozwiń filtry">
      <DoubleChevron left />
    </button>
    <div className="mt-4 flex flex-col items-center gap-[7px]">
      <svg width="13" height="13" viewBox="0 0 13 13" fill="none" stroke="#252423" strokeWidth="1.200">
        <path d="M12 1v11L7 8.500H1.500v-4H7z" />
      </svg>
      <h2 className="text-[15px] leading-5 font-semibold [writing-mode:vertical-rl]">Filtry</h2>
    </div>
  </aside>
);

const Toggle: React.FC<{ label: string; on?: boolean }> = ({ label, on = false }) => {
  const [checked, setChecked] = useState(on);
  return (
    <label className="flex items-start justify-between pr-[23px] leading-4">
      <span className="w-[110px]">{label}</span>
      <span className="relative flex">
        <input
          type="checkbox"
          role="switch"
          checked={checked}
          onChange={() => setChecked(!checked)}
          className="h-4 w-8 appearance-none rounded-full border border-[#605e5c] bg-white before:mt-[3px] before:ml-1 before:block before:h-2 before:w-2 before:rounded-full before:bg-[#605e5c] checked:border-[#117865] checked:bg-[#117865] checked:before:ml-[18px] checked:before:bg-white"
        />
        {checked && (
          <svg className="absolute top-1 left-[6px]" width="10" height="8" viewBox="0 0 10 8" fill="none" stroke="#fff" strokeWidth="2.200">
            <path d="M1 4l3 3 5-6" />
          </svg>
        )}
      </span>
    </label>
  );
};

const VisualizationsPane: React.FC = () => (
  <aside className="w-[181px] shrink-0 border-l border-[#e1dfdd] bg-[#f3f2f1] text-[11px]">
    <div className="flex h-[39px] items-center justify-between pr-2 pl-2">
      <h2 className="text-[15px] leading-5 font-semibold">Wizualizacje</h2>
      <button type="button" aria-label="Zwiń wizualizacje">
        <DoubleChevron />
      </button>
    </div>
    <h3 className="pl-2 text-[11px] leading-[14px] font-semibold">Utwórz element wizualny</h3>
    <div className="mt-1 flex items-center pl-2">
      <button type="button" aria-label="Kompilowanie wizualizacji" className="flex h-8 w-8 items-center justify-center rounded-[2px] bg-[#d2d0ce]">
        <svg width="24" height="25" viewBox="0 0 24 25" fill="none" stroke="#252423">
          <path d="M0 1h19" />
          <path d="M.5 5.500h23v7H.5zM.5 16.500h23v7H.5z" fill="#117865" strokeDasharray="2 1" />
        </svg>
      </button>
      <button type="button" aria-label="Formatowanie wizualizacji" className="ml-[37px]">
        <svg width="26" height="26" viewBox="0 0 26 26" fill="none" stroke={DARK} strokeWidth="1.300">
          <path d="M6 23.500H1.500V1.500h11l6 6V10M12.500 1.500v6h6" />
          <path d="M24.500 9l-9 8 2.500 2.500 7-9zM15 17c-3 0-3 2-4 4s-2 2-3 2c3 2 9 1 10-3z" fill="#f3f2f1" />
        </svg>
      </button>
      <button type="button" aria-label="Analiza" className="ml-[41px]">
        <svg width="24" height="26" viewBox="0 0 24 26" fill="none" stroke={DARK} strokeWidth="1.300">
          <path d="M5 23.500H1.500v-22H18V5M5 14l4.500-10 3 6M6.500 11h5" />
          <path d="M6 24l2-6L19.500 7l3 3L11 21.500zM17 9.500l3 3M8 18l3 3.500" fill="#f3f2f1" />
        </svg>
      </button>
    </div>
    <svg className="mt-1 w-full" height="9" fill="none" stroke="#8a8886">
      <path d="M0 8.500h16l8-8 8 8h160" />
    </svg>
    <div className="mt-[6px] grid grid-cols-[repeat(6,28px)] pl-[6px]">
      {galleryIcons.map((v) => (
        <GalleryButton key={v.name} name={v.name} art={v.art} text={v.text} />
      ))}
    </div>
    <div className="mx-[6px] mt-[2px] border-t border-dashed border-[#d2d0ce]" />
    <div className="mt-[2px] grid grid-cols-[repeat(6,28px)] pl-[6px]">
      {customIcons.map((v) => (
        <GalleryButton key={v.name} name={v.name} art={v.art} />
      ))}
    </div>
    <div className="mt-1 border-t border-[#e1dfdd] pt-[9px] pl-3 leading-4">
      <h3>Wartości</h3>
      <div className="mt-[6px] mr-[6px] -ml-2 border border-dashed border-[#c8c6c4] bg-white px-[10px] leading-[26px] whitespace-nowrap">
        Dodaj pola danych tutaj
      </div>
      <h3 className="mt-[10px] mb-[9px] font-semibold text-[#484644]">Drąż wskroś</h3>
      <Toggle label="Pomiędzy raportami" />
      <div className="mt-[10px]">
        <Toggle label="Zachowaj wszystkie filtry" on />
      </div>
      <div className="mt-[10px] mr-[6px] -ml-2 border border-dashed border-[#c8c6c4] bg-white px-2 leading-6 whitespace-nowrap">
        Dodaj tutaj pola przegląda...
      </div>
    </div>
  </aside>
);

interface Field {
  name: string;
  kind?: 'sum' | 'geo' | 'measure';
}

interface DataTable {
  name: string;
  calculated?: boolean;
  fields?: Field[];
}

const dataTables: DataTable[] = [
  { name: 'Cena testowa', calculated: true },
  { name: 'DimKalendarz' },
  { name: 'DimKategorie' },
  { name: 'DimPowodyZwrotow', calculated: true },
  { name: 'DimPracownicy' },
  { name: 'DimProdukty' },
  {
    name: 'DimSklepy',
    fields: [
      { name: 'LiczbaPracowni...', kind: 'sum' },
      { name: 'Manager' },
      { name: 'Miasto', kind: 'geo' },
      { name: 'Nazwa' },
      { name: 'OtwartyOd' },
      { name: 'Powierzchnia_m2', kind: 'sum' },
      { name: 'Region' },
      { name: 'SklepID' },
      { name: 'Typ' },
      { name: 'Tytuł szczegółów', kind: 'measure' },
      { name: 'Wojewodztwo' },
    ],
  },
  { name: 'Elastyczność', calculated: true },
  { name: 'FaktBudzet' },
  { name: 'FaktSatysfakcja' },
  { name: 'FaktSprzedaz' },
  { name: 'FaktZwroty' },
  { name: 'Miara wyboru', calculated: true },
  { name: 'Podwyżka kosztów', calculated: true },
  { name: 'Rabat proc', calculated: true },
  { name: 'Wymiar analizy', calculated: true },
  { name: 'Zmiana ceny', calculated: true },
];

const TableIcon: React.FC<{ calculated?: boolean }> = ({ calculated }) => (
  <svg width="14" height="14" viewBox="0 0 14 14" fill="none" stroke="#252423" strokeWidth="1.100" className="shrink-0 overflow-visible">
    {calculated ? (
      <>
        <path d="M6 12.500H3a2 2 0 01-2-2v-8A2 2 0 013 1h7.500A2 2 0 0112.500 3M1 4.700h9M1 8.700h5M4.700 1v11.500M8.700 1v4" />
        <rect x="7.500" y="6" width="6.500" height="8" rx="1" />
        <path d="M7.500 8.500H14M7.500 11H14M10.800 8.500V14" strokeWidth="1" />
      </>
    ) : (
      <>
        <rect x="1" y="1" width="12" height="12" rx="2.500" />
        <path d="M1 4.700h12M1 9.300h12M4.700 1v12M9.300 1v12" />
      </>
    )}
  </svg>
);

const FieldIcon: React.FC<{ kind?: Field['kind'] }> = ({ kind }) => {
  if (kind === 'sum') {
    return (
      <svg width="12" height="13" viewBox="0 0 12 13" fill="none" stroke="#252423" strokeWidth="1.200">
        <path d="M10.500 2.500V1H1.500L7 6.500 1.500 12h9.500v-2" />
      </svg>
    );
  }
  if (kind === 'geo') return <Globe size={13} strokeWidth={2} />;
  if (kind === 'measure') {
    return (
      <svg width="12" height="14" viewBox="0 0 12 14" fill="none" stroke="#252423">
        <rect x=".5" y=".5" width="11" height="13" rx="1.500" />
        <path d="M3 3h6v1.500H3z" />
        <path d="M2.500 7h7M2.500 9h7M2.500 11h7" strokeDasharray="1.500 1" />
      </svg>
    );
  }
  return null;
};

const DataPane: React.FC = () => (
  <aside className="w-[181px] shrink-0 border-l border-[#e1dfdd] bg-[#f3f2f1] text-[11px] text-[#323130]">
    <div className="flex h-[39px] items-center justify-between pr-2 pl-2 text-[#252423]">
      <h2 className="text-[15px] leading-5 font-semibold">Dane</h2>
      <button type="button" aria-label="Zwiń dane">
        <DoubleChevron />
      </button>
    </div>
    <label className="mx-1 mt-[5px] flex h-[25px] items-center gap-2 rounded border border-[#d2d0ce] border-b-[#605e5c] bg-white pl-[10px]">
      <Search size={16} strokeWidth={1.300} className="shrink-0 text-[#605e5c]" />
      <input
        type="search"
        aria-label="Wyszukaj"
        placeholder="Wyszukaj"
        className="w-full min-w-0 bg-transparent text-[13px] leading-5 outline-none placeholder:text-[#605e5c]"
      />
    </label>
    <ul className="mt-[10px]">
      {dataTables.map((t) => (
        <li key={t.name}>
          <button type="button" className="flex h-6 w-full items-center gap-1 pl-3 whitespace-nowrap">
            <svg width="12" height="12" viewBox="0 0 12 12" fill="none" stroke="#605e5c" strokeWidth="1.100" className="shrink-0">
              <path d={t.fields ? 'M.5 3.500L6 9l5.500-5.500' : 'M3 .5L8.500 6 3 11.500'} />
            </svg>
            <span className="flex items-center gap-1">
              <TableIcon calculated={t.calculated} />
              {t.name}
            </span>
          </button>
          {t.fields && (
            <ul>
              {t.fields.map((f) => (
                <li key={f.name}>
                  <label className="flex h-6 items-center pl-[44px] whitespace-nowrap">
                    <input type="checkbox" className="h-3 w-3 shrink-0 appearance-none rounded-[2px] border border-[#8a8886] checked:bg-[#117865]" />
                    <span className="ml-[6px] flex w-4 shrink-0 justify-center">
                      <FieldIcon kind={f.kind} />
                    </span>
                    <span className="ml-1">{f.name}</span>
                  </label>
                </li>
              ))}
            </ul>
          )}
        </li>
      ))}
    </ul>
  </aside>
);

/* ---------- status bar and badge ---------- */

const StatusBar: React.FC = () => (
  <footer className="flex h-6 shrink-0 items-center border-t border-[#e1dfdd] bg-[#f3f2f1] pt-px pr-[5px] pl-1 text-[11px] leading-4 text-[#484644]">
    <span>Strona 14 z 14</span>
    <div className="ml-auto flex items-center">
      <button type="button" aria-label="Pomniejsz" className="w-3 font-bold">-</button>
      <input
        type="range"
        min={10}
        max={190}
        defaultValue={76}
        aria-label="Powiększenie"
        className="mx-[2px] h-3 w-[100px] appearance-none bg-[linear-gradient(#605e5c,#605e5c),linear-gradient(#605e5c,#605e5c)] bg-[length:100%_1px,1px_5px] bg-[position:center,49%_center] bg-no-repeat [&::-webkit-slider-thumb]:h-[11px] [&::-webkit-slider-thumb]:w-1 [&::-webkit-slider-thumb]:appearance-none [&::-webkit-slider-thumb]:bg-[#605e5c]"
      />
      <button type="button" aria-label="Powiększ" className="w-4 text-[13px]">+</button>
      <span className="ml-[10px] w-[24px] text-center">76%</span>
      <button type="button" aria-label="Dopasuj do strony" className="ml-[17px]">
        <svg width="17" height="13" viewBox="0 0 17 13" fill="none" stroke="#605e5c">
          <path d="M.5.500h16v12H.5z" />
          <path d="M3.500 5V3.500H6M11 3.500h2.500V5M13.500 8v1.500H11M6 9.500H3.500V8" />
        </svg>
      </button>
      <a href="#update" className="ml-[14px] w-[241px] whitespace-nowrap">Jest dostępna aktualizacja (kliknij, aby pobrać)</a>
    </div>
  </footer>
);

// Rings of the JSystems mark: [distance, radius, colour, start angle, count]
const rings: [number, number, string, number, number][] = [
  [20, 3.500, '#ee1c25', -90, 6],
  [16.500, 2.300, '#ee1c25', -60, 6],
  [12.500, 2.100, '#6d6b6c', -90, 6],
  [10.500, 1.400, '#6d6b6c', -60, 6],
];

const Badge: React.FC = () => (
  <div className="absolute right-[15px] bottom-[16px] z-20 flex h-[91px] w-[242px] items-center gap-1 rounded-full border border-[#dcdce0] bg-white pl-[25px]">
    <svg width="48" height="48" viewBox="-24 -24 48 48" aria-hidden="true" className="shrink-0">
      {rings.flatMap(([dist, r, fill, start, count]) =>
        Array.from({ length: count }, (_, i) => {
          const a = ((start + (i * 360) / count) * Math.PI) / 180;
          return <circle key={`${dist}-${i}`} cx={dist * Math.cos(a)} cy={dist * Math.sin(a)} r={r} fill={fill} />;
        }),
      )}
    </svg>
    <div className="flex flex-col items-end font-['Lato','Open_Sans',sans-serif] text-[#6d6b6c]">
      <span className="text-[33px] leading-[30px] font-bold whitespace-nowrap">
        JS<span className="text-[26px]">YSTEMS</span>
      </span>
      <span className="text-[6px] leading-2 font-bold whitespace-nowrap">INSPIRACJA - WIEDZA - REALIZACJA</span>
    </div>
  </div>
);

const App: React.FC = () => (
  <div className="relative flex h-screen flex-col overflow-hidden bg-[#f3f2f1] font-['Open_Sans','Noto_Sans',sans-serif] text-[#252423]">
    <TitleBar />
    <Ribbon />
    <div className="flex min-h-0 flex-1">
      <Rail />
      <main className="flex min-w-0 flex-1 flex-col">
        <div className="flex min-h-0 flex-1">
          <div className="flex min-w-0 flex-1 bg-[#e3e3e3] px-[13px]">
            <div className="relative flex-1 bg-[#ebebf0] shadow-[0_0_8px_rgba(0,0,0,0.12)]">
              <Slicer />
            </div>
          </div>
          <FiltersPane />
        </div>
        <PageTabs />
      </main>
      <VisualizationsPane />
      <DataPane />
    </div>
    <StatusBar />
    <Badge />
  </div>
);

export default App;
